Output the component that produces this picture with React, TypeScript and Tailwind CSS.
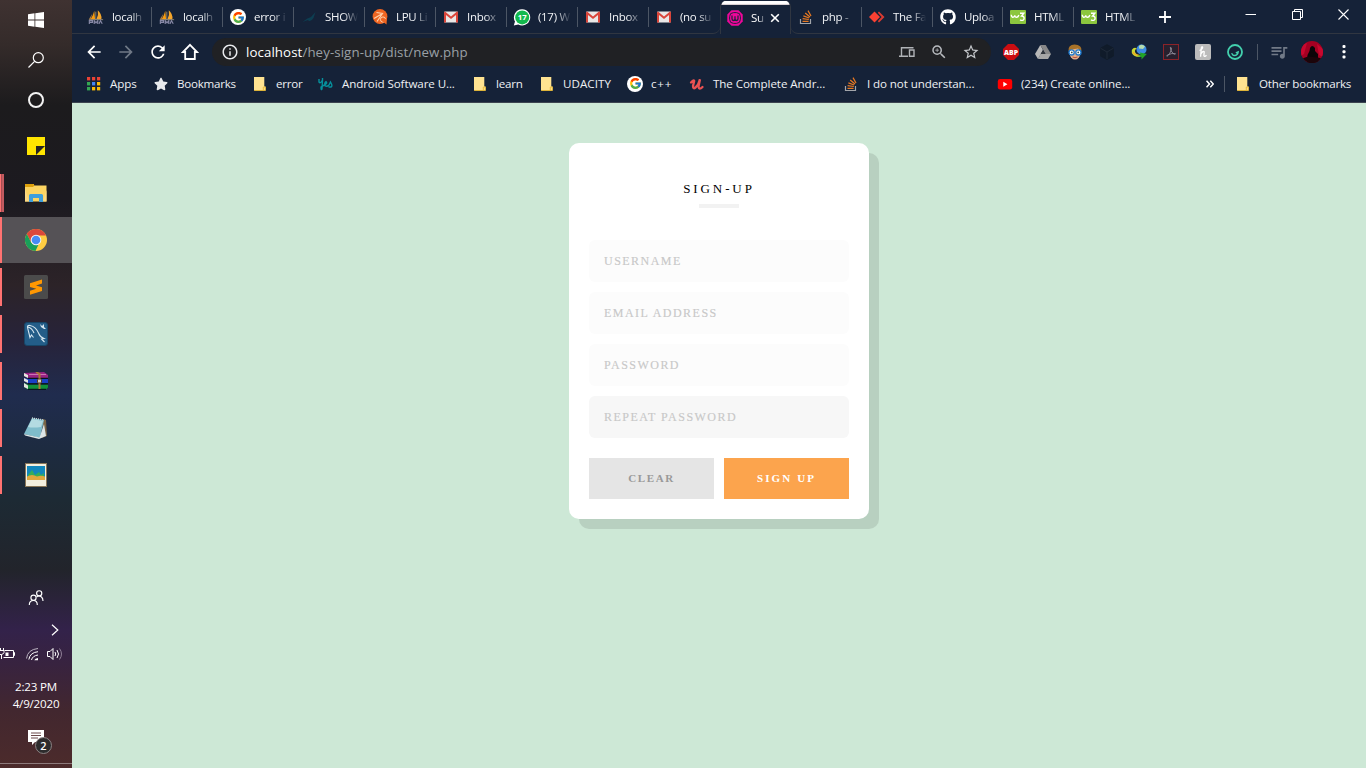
import React from "react";
import { FcGoogle } from "react-icons/fc";
import { FaGithub, FaStar } from "react-icons/fa";
import {
  MdArrowBack,
  MdArrowForward,
  MdRefresh,
  MdInfoOutline,
  MdZoomIn,
  MdStarBorder,
  MdQueueMusic,
} from "react-icons/md";

const UI = "font-['Open_Sans','Noto_Sans',sans-serif]";
const SERIF = "font-['Liberation_Serif',serif]";

/* ---------- favicons ---------- */

function PhpMyAdmin() {
  return (
    <svg width="18" height="16" viewBox="0 0 18 16">
      <path d="M7 1 L8 10.5 H3 Q6 6 7 1Z" fill="#f89c0e" />
      <path d="M11 .5 Q16 5 15 10.5 H9.5 Q12 6 11 .5Z" fill="#f5a62b" />
      <path d="M5 4 L1 10.5 H3Z" fill="#ad7d45" />
      <path d="M8.8 2V11 M1 11H17" stroke="#bba985" strokeWidth=".8" />
      <path d="M1.5 16V12H5V14H2M7 16V12L9 14.5L11 12V16M12.5 15.5L14 12L16 15.5" fill="none" stroke="#8889a6" strokeWidth="1.3" />
    </svg>
  );
}

function GoogleBadge() {
  return (
    <span className="flex size-4 items-center justify-center rounded-full bg-white">
      <FcGoogle size={13} />
    </span>
  );
}

function Swoosh() {
  return (
    <svg width="16" height="16" viewBox="0 0 16 16">
      <path d="M1.5 13 Q6 9 10 8 L14.5 3 L12.5 9 Q10.5 12.5 8 12 L7 11Z" fill="#0d3e51" />
    </svg>
  );
}

function Lpu() {
  return (
    <svg width="16" height="16" viewBox="0 0 16 16">
      <circle cx="8" cy="7.5" r="7.4" fill="#ef6521" />
      <path d="M2 9.5 L10.5 4.5 M5 12.5 L10.5 4.5 L4.5 3.5" fill="none" stroke="#ffd1ac" strokeWidth="1.2" />
      <circle cx="11" cy="10.5" r="2.6" fill="#ef6521" stroke="#ffd1ac" strokeWidth="1" />
      <path d="M10 12 L14.5 15.5 L15 9Z" fill="#ef6521" />
    </svg>
  );
}

function Gmail() {
  return (
    <svg width="16" height="16" viewBox="0 0 16 16">
      <rect x="1" y="2.5" width="14" height="11" rx="1" fill="#e9e7e6" />
      <path d="M1 4 V13.5 H3 V6 L8 10 L13 6 V13.5 H15 V3.5 Q15 2.5 14 2.5 L8 7.4 L2 2.5 Q1 2.5 1 4Z" fill="#d9453a" />
    </svg>
  );
}

function WhatsApp() {
  return (
    <svg className="shrink-0" width="18" height="17" viewBox="0 0 18 17">
      <path d="M9.2 .3a8.1 8.1 0 1 1-4 15.2L.8 16.6 2 12.4A8.1 8.1 0 0 1 9.2 .3Z" fill="#fff" />
      <circle cx="9.2" cy="8.4" r="7" fill="#12b94d" />
      <text x="9.2" y="11.3" textAnchor="middle" fontSize="7.8" fontWeight="700" fill="#fff" fontFamily="Open Sans, sans-serif">17</text>
    </svg>
  );
}

function Wamp() {
  return (
    <svg className="shrink-0" width="16" height="16" viewBox="0 0 16 16">
      <path d="M4.5 .3H11.5L15.7 4.5V11.5L11.5 15.7H4.5L.3 11.5V4.5Z" fill="#f0069c" />
      <rect x="2.6" y="2.6" width="10.8" height="10.8" rx="4" fill="none" stroke="#26203e" strokeWidth="1" />
      <path d="M5 5.5V8.8A1.5 1.7 0 0 0 8 8.8V6.3M8 8.8A1.5 1.7 0 0 0 11 8.8V5.5" fill="none" stroke="#26203e" strokeWidth="1.3" />
    </svg>
  );
}

function StackOverflow() {
  return (
    <svg width="16" height="16" viewBox="0 0 16 16">
      <path d="M2.5 10V14.5H12.5V10" fill="none" stroke="#a2a5aa" strokeWidth="1.2" />
      <path d="M4.5 12.4H10.6M4.6 9.7L10.8 10.5M5.4 6.9L11.2 9M7.2 4.1L12 8M10 1.6L13 7" stroke="#e87922" strokeWidth="1.25" />
    </svg>
  );
}

function Diamonds() {
  return (
    <svg width="16" height="16" viewBox="0 0 16 16">
      <path d="M5.5 2.5L11 8L5.5 13.5L0 8Z" fill="#fb4133" />
      <path d="M10 2.5L15.5 8L10 13.5L8.8 12.2L12.6 8L8.8 3.8Z" fill="#d93b31" />
    </svg>
  );
}

function W3() {
  return (
    <svg width="16" height="16" viewBox="0 0 16 16">
      <rect y="1" width="16" height="14" rx="1" fill="#8cc63e" />
      <path d="M1.3 5.8Q1.5 8.4 3 8.3Q4.8 8.2 4.8 6.2Q5 8.5 6.8 8.3Q8.3 8 8.8 6M10 4.3H13.8L11.6 7Q14.5 7 14 10Q13 12.3 10 10.8" fill="none" stroke="#fff" strokeWidth="1.4" />
    </svg>
  );
}

function Folder() {
  return (
    <svg width="16" height="16" viewBox="0 0 16 16">
      <path d="M2 1H12.3V10.5H13.6V14.6H2Z" fill="#ffe391" />
      <path d="M11.3 14.3V11H13.4V14.5H2.2" fill="none" stroke="#e7b934" strokeWidth=".9" />
    </svg>
  );
}

function AppsGrid() {
  const colors = ["#e94335", "#e94335", "#e94335", "#34a853", "#4285f4", "#fbbc05", "#34a853", "#fbbc05", "#fbbc05"];
  return (
    <svg width="16" height="16" viewBox="0 0 16 16">
      {colors.map((c, i) => (
        <rect key={i} x={1 + (i % 3) * 5} y={1 + Math.floor(i / 3) * 5} width="3.2" height="3.4" fill={c} />
      ))}
    </svg>
  );
}

function Squiggle() {
  return (
    <svg width="16" height="16" viewBox="0 0 16 16" fill="none" stroke="#06909c" strokeWidth="1.4">
      <path d="M1 3V6Q2.5 8 4.5 4V2M4.5 4L4 13Q3 15 3 11Q5 9.5 6.5 9Q10 7 8 5.5Q6 7 7.2 10Q9 11 11 9L12.5 6Q15 10 13 11H10.5" />
    </svg>
  );
}

function Udemy() {
  return (
    <svg width="16" height="16" viewBox="0 0 16 16" fill="none" stroke="#eb5252" strokeWidth="2.3" strokeLinecap="round">
      <path d="M2 6.5Q5 3.5 5.2 5L4 10Q4 13.5 6.5 11.5Q9.5 9 11 3.3L9.5 10.5Q10 14.5 13.5 11" />
    </svg>
  );
}

function YouTube() {
  return (
    <svg width="16" height="16" viewBox="0 0 16 16">
      <rect x=".8" y="3" width="14.4" height="10.6" rx="2.4" fill="#f00" />
      <path d="M6.3 5.8L10.4 8.3L6.3 10.8Z" fill="#fff" />
    </svg>
  );
}

/* ---------- tab strip ---------- */

type TabData = { icon: React.ReactNode; title: string; narrow?: boolean };

const leftTabs: TabData[] = [
  { icon: <PhpMyAdmin />, title: "localh" },
  { icon: <PhpMyAdmin />, title: "localh" },
  { icon: <GoogleBadge />, title: "error i" },
  { icon: <Swoosh />, title: "SHOW" },
  { icon: <Lpu />, title: "LPU Li" },
  { icon: <Gmail />, title: "Inbox" },
  { icon: <WhatsApp />, title: "(17) W" },
  { icon: <Gmail />, title: "Inbox" },
  { icon: <Gmail />, title: "(no su" },
];

const rightTabs: TabData[] = [
  { icon: <StackOverflow />, title: "php -" },
  { icon: <Diamonds />, title: "The Fa" },
  { icon: <FaGithub size={16} color="#fff" />, title: "Uploa", narrow: true },
  { icon: <W3 />, title: "HTML" },
  { icon: <W3 />, title: "HTML" },
];

function Tab({ icon, title, narrow = false, divider = true }: TabData & { divider?: boolean }) {
  return (
    <div className={`flex h-[33px] shrink-0 items-center pl-[7px] pt-px ${narrow ? "w-[70px]" : "w-[71px]"}`}>
      <span className="flex size-4 shrink-0 items-center justify-center">{icon}</span>
      <span className="ml-2 w-[36px] shrink-0 whitespace-nowrap text-[11.5px] tracking-[-0.3px] text-[#f2f4f7] [mask-image:linear-gradient(90deg,#000_50%,transparent_92%)]">
        {title}
      </span>
      <span className={divider ? `h-5 w-px shrink-0 bg-[#4c5665] ${narrow ? "ml-[2px]" : "ml-[3px]"}` : "hidden"} />
    </div>
  );
}

function ActiveTab() {
  return (
    <div className="flex h-[34px] w-[71px] shrink-0 flex-col overflow-hidden rounded-t-[7px] border-x border-[#303641] bg-[#152238]">
      <div className="mt-px h-[4px] shrink-0 rounded-t-[5px] bg-[linear-gradient(180deg,#fff_60%,#c9bcc0_100%)]" />
      <div className="flex h-[25px] items-center pl-[6px]">
        <Wamp />
        <span className="ml-2 w-[15px] shrink-0 whitespace-nowrap text-[11.5px] tracking-[-0.3px] text-white [mask-image:linear-gradient(90deg,#000_50%,transparent_98%)]">
          Su
        </span>
        <svg className="ml-[4px]" width="10" height="10" viewBox="0 0 10 10">
          <path d="M1.2 1.2L8.8 8.8M8.8 1.2L1.2 8.8" stroke="#fff" strokeWidth="1.6" />
        </svg>
      </div>
    </div>
  );
}

function TabStrip() {
  return (
    <div className="flex h-[34px] shrink-0">
      <div className="flex h-[34px] rounded-br-[7px] border-b border-[#303641] pl-[9px]">
        <div className="flex w-[639px]">
          {leftTabs.map((t, i) => (
            <Tab key={i} {...t} divider={i < 8} />
          ))}
        </div>
      </div>
      <ActiveTab />
      <div className="flex flex-1 rounded-bl-[7px] border-b border-[#303641]">
        <div className="flex w-[355px] shrink-0">
          {rightTabs.map((t, i) => (
            <Tab key={i} {...t} divider={i > 0 ? i < 4 : true} />
          ))}
        </div>
        <svg className="ml-[13px] mt-[11px]" width="12" height="12" viewBox="0 0 12 12">
          <path d="M6 0V12M0 6H12" stroke="#fff" strokeWidth="1.8" />
        </svg>
        <div className="ml-auto flex items-start pr-[17px]">
          <svg className="mr-[36px] mt-[9px]" width="11" height="11" viewBox="0 0 11 11">
            <path d="M.5 5.5H11" stroke="#fff" />
          </svg>
          <svg className="mr-[35px] mt-[9px]" width="11" height="11" viewBox="0 0 11 11" fill="none" stroke="#fff">
            <path d="M.5 2.5H8.5V10.5H.5ZM2.5 2.5V.5H10.5V8.5H8.5" />
          </svg>
          <svg className="mt-[9px]" width="11" height="11" viewBox="0 0 11 11">
            <path d="M.5 .5L10.5 10.5M10.5 .5L.5 10.5" stroke="#fff" strokeWidth="1.1" />
          </svg>
        </div>
      </div>
    </div>
  );
}

/* ---------- toolbar ---------- */

function Cell({ children }: { children: React.ReactNode }) {
  return <span className="flex w-8 shrink-0 items-center justify-center">{children}</span>;
}

function Toolbar() {
  return (
    <div className="flex h-9 shrink-0 items-center pl-[6px] text-white">
      <Cell><MdArrowBack size={20} /></Cell>
      <Cell><MdArrowForward size={20} color="#707987" /></Cell>
      <Cell><MdRefresh size={20} /></Cell>
      <Cell>
        <svg width="18" height="18" viewBox="0 0 18 18">
          <path d="M9 1.8L16 9H13.8V16H4.2V9H2Z" fill="none" stroke="#fff" strokeWidth="1.8" />
        </svg>
      </Cell>
      <div className="ml-[6px] flex h-7 w-[779px] items-center rounded-full bg-[#202124] pl-[9px]">
        <MdInfoOutline size={18} color="#e8eaed" />
        <span className="ml-[7px] flex-1 whitespace-nowrap pt-px text-[13.3px] tracking-[0.08px] text-[#9aa0a6]">
          <span className="text-white">localhost</span>/hey-sign-up/dist/new.php
        </span>
        <Cell>
          <svg width="16" height="14" viewBox="0 0 16 14">
            <path d="M2.5 10.5V2.7H14.5M0 11.2H9M10.5 5H15V11.2H10.5Z" fill="none" stroke="#b0b3b7" strokeWidth="1.4" />
          </svg>
        </Cell>
        <Cell><MdZoomIn size={18} color="#b8bbbf" /></Cell>
        <Cell><MdStarBorder size={18} color="#c4c7cb" /></Cell>
        <span className="w-[4px]" />
      </div>
      <span className="w-1" />
      <Cell>
        <svg width="16" height="16" viewBox="0 0 16 16">
          <path d="M5 0H11L16 5V11L11 16H5L0 11V5Z" fill="#cb0d11" />
          <text x="8" y="10.8" textAnchor="middle" fontSize="7.6" fontWeight="800" fill="#fff" fontFamily="Open Sans, sans-serif" textLength="14" lengthAdjust="spacingAndGlyphs">ABP</text>
        </svg>
      </Cell>
      <Cell>
        <svg width="16" height="14" viewBox="0 0 16 14">
          <path d="M5.3 0L8 5L3 14L0 9Z" fill="#b8b8b8" />
          <path d="M5.3 0H10.7L16 9H10.5Z" fill="#888" />
          <path d="M5.5 9H16L13 14H3Z" fill="#a6a6a6" />
          <path d="M8 5L10.3 9H5.7Z" fill="#34383e" />
        </svg>
      </Cell>
      <Cell>
        <svg width="16" height="16" viewBox="0 0 16 16">
          <ellipse cx="8" cy="9" rx="5.3" ry="6.6" fill="#e3b08b" />
          <path d="M1.5 7Q1 .5 7.5 .5Q15 .5 14.5 7L11 4.5L6 5.2L3.5 7Z" fill="#a87228" />
          <circle cx="4.6" cy="8.4" r="2.6" fill="#fff" stroke="#1f79cc" strokeWidth="1.3" />
          <circle cx="11.4" cy="8.4" r="2.6" fill="#fff" stroke="#1f79cc" strokeWidth="1.3" />
          <circle cx="4.8" cy="8.4" r=".9" fill="#355" />
          <circle cx="11.2" cy="8.4" r=".9" fill="#355" />
          <path d="M5.5 13Q8 14.4 10.5 13" fill="none" stroke="#b74e40" />
        </svg>
      </Cell>
      <Cell>
        <svg width="16" height="16" viewBox="0 0 16 16">
          <path d="M8 .7L14.5 4.2V12L8 15.5L1.5 12V4.2Z" fill="#101b2a" stroke="#111c2a" />
          <path d="M1.5 4.2L8 8L14.5 4.2M8 8V15" stroke="#1f2a39" fill="none" />
        </svg>
      </Cell>
      <Cell>
        <svg width="16" height="16" viewBox="0 0 16 16">
          <circle cx="10.5" cy="5.5" r="5" fill="#3c8ae0" />
          <path d="M8 2Q11 -.5 14 2.5L12 5L8 4.5Z" fill="#b5dcae" />
          <path d="M.8 6Q3 2.5 6 4.5Q3.5 5.5 4 8Q5 11 9.5 11V13Q3 13.5 .8 9Z" fill="#c8d834" />
          <path d="M2 8Q4 11.5 9 11.5" fill="none" stroke="#ff9e1d" strokeWidth="1.1" />
          <path d="M9 8.5L15.8 10L10.5 15.5V13L6 12L9.5 11Z" fill="#21a325" />
        </svg>
      </Cell>
      <Cell>
        <svg width="16" height="16" viewBox="0 0 16 16" fill="none">
          <rect x=".5" y=".5" width="15" height="15" fill="#27202e" stroke="#8b2329" />
          <path d="M7.3 3.3Q9 3 8.2 6.3Q7 10.3 4 12.3Q2.8 12 5 10.8Q9 8.8 12.5 9.8Q12.5 11 10 9.3Q7.5 7.3 7.3 3.3Z" stroke="#8f8c99" strokeWidth=".9" />
        </svg>
      </Cell>
      <Cell>
        <svg width="16" height="16" viewBox="0 0 16 16" fill="none">
          <rect width="16" height="16" rx="2" fill="#bcbcbc" />
          <path d="M4.5 6.5Q7.8 5 7.6 3.3Q7 2 6.3 4L5.6 12.8M6 9.8Q8 6.5 9.2 7.7L8.9 11.5Q9.3 13.5 11.5 11.3" stroke="#fff" strokeWidth="1.3" />
        </svg>
      </Cell>
      <Cell>
        <svg width="16" height="16" viewBox="0 0 16 16" fill="none" stroke="#43d0ad" strokeWidth="1.8">
          <circle cx="8" cy="8" r="7" />
          <path d="M4.6 9.2Q5.6 11.6 8 11.5Q11 11.2 11.2 7.8L8.8 8.8" strokeWidth="1.4" />
        </svg>
      </Cell>
      <span className="ml-[6px] h-4 w-px bg-[#4c5665]" />
      <span className="ml-[5px]"><Cell><MdQueueMusic size={20} color="#717a87" /></Cell></span>
      <span className="ml-[6px] flex size-[22px] shrink-0 overflow-hidden rounded-full bg-[#a60022]">
        <svg width="22" height="22" viewBox="0 0 22 22">
          <path d="M0 4L6 2L3 13L0 15M16 3L22 8V16L18 14Z" fill="#c8082f" />
          <path d="M6 22L6.5 14L8.5 10L9 7Q11 3 14 7L14 10L17 13L17 22Z" fill="#0c0508" />
          <path d="M0 18L7 15.5L17 16.5L22 18V22H0Z" fill="#1b050a" />
        </svg>
      </span>
      <svg className="ml-[19px]" width="4" height="14" viewBox="0 0 4 14" fill="#fff">
        <rect x=".5" y="0" width="3" height="3" rx="1" />
        <rect x=".5" y="5.2" width="3" height="3" rx="1" />
        <rect x=".5" y="10.4" width="3" height="3" rx="1" />
      </svg>
    </div>
  );
}

/* ---------- bookmarks ---------- */

const bookmarks = [
  { icon: <AppsGrid />, label: "Apps", w: "w-[67px]", t: "tracking-[-0.1px]" },
  { icon: <FaStar size={14} color="#e8eaed" />, label: "Bookmarks", w: "w-[99px]", t: "tracking-[-0.25px]" },
  { icon: <Folder />, label: "error", w: "w-[66px]", t: "tracking-[-0.25px]" },
  { icon: <Squiggle />, label: "Android Software U...", w: "w-[154px]", t: "tracking-[-0.1px]" },
  { icon: <Folder />, label: "learn", w: "w-[67px]", t: "tracking-[-0.2px]" },
  { icon: <Folder />, label: "UDACITY", w: "w-[88px]", t: "tracking-[0.05px]" },
  { icon: <GoogleBadge />, label: "c++", w: "w-[62px]", t: "tracking-[0.8px]" },
  { icon: <Udemy />, label: "The Complete Andr...", w: "w-[154px]", t: "tracking-[-0.07px]" },
  { icon: <StackOverflow />, label: "I do not understan...", w: "w-[154px]", t: "tracking-[-0.1px]" },
  { icon: <YouTube />, label: "(234) Create online...", w: "w-[154px]", t: "tracking-[-0.08px]" },
];

function BookmarkBar() {
  return (
    <div className="flex h-[33px] shrink-0 items-center border-b border-[#3c4450] pb-[4px] pl-[14px] text-[11.6px] text-[#eef0f3]">
      {bookmarks.map((b) => (
        <div key={b.label} className={`flex shrink-0 items-center gap-2 ${b.w}`}>
          <span className="flex size-4 items-center justify-center">{b.icon}</span>
          <span className={`whitespace-nowrap ${b.t}`}>{b.label}</span>
        </div>
      ))}
      <svg className="ml-[55px]" width="8" height="8" viewBox="0 0 8 8">
        <path d="M.5 .8L3.5 4L.5 7.2M4.3 .8L7.3 4L4.3 7.2" fill="none" stroke="#fff" strokeWidth="1.5" />
      </svg>
      <span className="ml-[10px] h-4 w-px bg-[#4c5665]" />
      <div className="ml-[10px] flex items-center gap-2">
        <Folder />
        <span className="whitespace-nowrap tracking-[-0.2px]">Other bookmarks</span>
      </div>
    </div>
  );
}

/* ---------- taskbar ---------- */

const apps: { name: string; mark: string; active?: boolean; icon: React.ReactNode }[] = [
  {
    name: "notes",
    mark: "none",
    icon: (
      <svg width="18" height="18" viewBox="0 0 18 18">
        <path d="M0 0H18V18H0Z" fill="#ffe500" />
        <path d="M9 9H18L9 18Z" fill="#232323" />
      </svg>
    ),
  },
  {
    name: "explorer",
    mark: "stack",
    icon: (
      <svg width="22" height="18" viewBox="0 0 22 18">
        <path d="M0 0H9V1.5H21.5V17.5H0Z" fill="#fcd462" />
        <path d="M0 0H8.5L9.5 1.5L8 3H0Z" fill="#dda00c" />
        <path d="M4 18V11.5Q4 10 5.5 10H16.5Q18 10 18 11.5V18H14V14H8V18Z" fill="#3f9edb" />
        <path d="M0 17.5V5L4 16.5V17.5ZM18 17.5H21.5V6Z" fill="#fbd985" />
      </svg>
    ),
  },
  {
    name: "chrome",
    mark: "bar",
    active: true,
    icon: (
      <svg width="22" height="22" viewBox="0 0 22 22">
        <circle cx="11" cy="11" r="11" fill="#ffcd42" />
        <path d="M1.8 5A11 11 0 0 1 20.2 5L20.9 6.4H11L6.2 13.5Z" fill="#dc483b" />
        <path d="M1.8 5L6.3 13.7L11.5 16.2L13.5 15.5L10.5 22A11 11 0 0 1 1.8 5Z" fill="#189f5a" />
        <circle cx="11" cy="11" r="5.3" fill="#f3f3f3" />
        <circle cx="11" cy="11" r="4.3" fill="#478bf4" />
      </svg>
    ),
  },
  {
    name: "sublime",
    mark: "bar",
    icon: (
      <svg width="24" height="24" viewBox="0 0 24 24">
        <rect width="24" height="24" rx="1.5" fill="#4b4b4b" />
        <path d="M6 8.3L18 4.5V8.6L12 10.5L18 12.3V16L6 19.8V15.8L12.3 13.7L6 11.9Z" fill="#ff9802" />
      </svg>
    ),
  },
  {
    name: "mysql",
    mark: "bar",
    icon: (
      <svg width="24" height="24" viewBox="0 0 24 24" fill="none">
        <rect x=".5" y=".5" width="23" height="23" rx="2.5" fill="#235d88" stroke="#174566" />
        <path d="M9.5 15.5L7.5 13L6 15.5L3.5 5.5Q3 3 6 3.5Q12 4.5 15 12Q16 15 20 16.5L17.5 17L20.5 20M4 5Q8 6 10 11" stroke="#d4e5ef" strokeWidth="1.1" />
        <path d="M16 2L18 4L20 2V5L22 7L20 7L17 5Z" fill="#d4e5ef" />
      </svg>
    ),
  },
  {
    name: "winrar",
    mark: "bar",
    icon: (
      <svg width="24" height="18" viewBox="0 0 24 18">
        <path d="M0 1L20 0L24 3V6H4L0 4Z" fill="#9a2383" />
        <path d="M0 6L4 7H24V11H4L0 9Z" fill="#1940c6" />
        <path d="M0 11L4 12.5H24V15.5L22 17.5H4L0 15Z" fill="#12923a" />
        <path d="M4 6.3H24M4 11.8H24M4 17.4H22" stroke="#07151d" strokeWidth="1.2" />
        <path d="M0 1L4 3V6L0 4ZM0 6L4 8V11L0 9ZM0 11L4 13.5V17L0 15Z" fill="#e5e5df" />
        <path d="M5 2.5H22" stroke="#ca75b3" />
        <path d="M12 0L15.5 2V17" stroke="#ac7932" strokeWidth="2" fill="none" />
        <rect x="13.5" y="7" width="4" height="4" rx="1" fill="#d2cdbf" stroke="#573e20" />
      </svg>
    ),
  },
  {
    name: "notepad",
    mark: "bar",
    icon: (
      <svg width="24" height="24" viewBox="0 0 24 24">
        <path d="M19 3L22 4L23 20L18 22Z" fill="#786446" />
        <path d="M8 2L20 4L16 22L0 18Z" fill="#7fbccb" />
        <path d="M8 3L19 5L17 11Q9 12 4 11Z" fill="#b4dbe2" />
        <path d="M0 18L15.5 21.5L20 8L22 20L15 23L1 19.5Z" fill="#dce5e6" />
        <path d="M8 2L20 4" stroke="#d7e0de" strokeDasharray="1 1" strokeWidth="1.3" />
      </svg>
    ),
  },
  {
    name: "photos",
    mark: "bar",
    icon: (
      <svg width="22" height="24" viewBox="0 0 22 24">
        <rect x=".5" y=".5" width="21" height="23" fill="#f3efdf" stroke="#887557" />
        <rect x="2" y="3" width="18" height="14" fill="#1287bc" />
        <path d="M3 12L7 7L10 12L14 9L16 12L19 10V15H3Z" fill="#33ad5c" />
        <path d="M2 13.5Q7 10.5 12 13.5Q16 12 20 13.5V17H2Z" fill="#dfa83d" />
      </svg>
    ),
  },
];

function Taskbar() {
  return (
    <aside className="flex h-full w-[72px] shrink-0 flex-col bg-[linear-gradient(180deg,#3f3231_0px,#342b2a_45px,#1c1b1d_105px,#1c1a20_200px,#2c2328_285px,#27233a_340px,#202c4e_395px,#1d2b40_450px,#1d2a34_500px,#22242b_570px,#33224a_630px,#38233f_665px,#42272f_710px,#4c2b2b_768px)] text-white">
      <div className="flex h-10 shrink-0 items-center justify-center">
        <svg width="16" height="16" viewBox="0 0 16 16" fill="#fff">
          <path d="M0 2.2L6.5 1.3V7.6H0ZM7.3 1.2L16 0V7.6H7.3ZM0 8.4H6.5V14.7L0 13.8ZM7.3 8.4H16V16L7.3 14.8Z" />
        </svg>
      </div>
      <div className="flex h-10 shrink-0 items-center justify-center">
        <svg width="16" height="16" viewBox="0 0 16 16" fill="none" stroke="#fff" strokeWidth="1.2">
          <circle cx="10.3" cy="5.7" r="5" />
          <path d="M6.6 9.4L.5 15.5" />
        </svg>
      </div>
      <div className="mb-[3px] flex h-10 shrink-0 items-center justify-center">
        <span className="size-4 rounded-full border-[2.4px] border-[#f2f2f2]" />
      </div>
      {apps.map((a) => (
        <div key={a.name} className={`mb-px flex h-[46px] shrink-0 items-center ${a.active ? "bg-[#555256]" : ""}`}>
          <span className="flex w-[4px] shrink-0">
            {a.mark === "bar" && <span className={`w-[2px] bg-[#ff7271] ${a.active ? "h-[46px]" : "h-[38px]"}`} />}
            {a.mark === "stack" && (
              <>
                <span className="h-[38px] w-px bg-[#ff7271]" />
                <span className="h-[38px] w-px bg-[#a84d52]" />
                <span className="h-[38px] w-[2px] bg-[#c35a5f]" />
              </>
            )}
          </span>
          <span className="flex w-[64px] justify-center">{a.icon}</span>
        </div>
      ))}
      <div className="mt-[91px] flex h-4 shrink-0 items-center justify-center">
        <svg width="16" height="16" viewBox="0 0 16 16" fill="none" stroke="#fff" strokeWidth="1.15">
          <circle cx="5.5" cy="7.7" r="2.6" />
          <path d="M1.3 15Q1.3 10.5 5.5 10.5Q9.3 10.5 9.3 15" />
          <circle cx="11.2" cy="3.3" r="2.6" />
          <path d="M8.5 7Q11 5 13.5 7Q15 8.3 15 11" />
        </svg>
      </div>
      <div className="mt-[18px] flex h-3 shrink-0 justify-end pr-[13px]">
        <svg width="8" height="12" viewBox="0 0 8 12">
          <path d="M1 .8L6.8 6L1 11.2" fill="none" stroke="#fff" strokeWidth="1.2" />
        </svg>
      </div>
      <div className="mt-[10px] flex h-4 shrink-0 items-center">
        <svg width="15" height="14" viewBox="0 0 15 14" fill="none" stroke="#fff">
          <path d="M4.5 3.5H13.5V10.5H3.5M13.5 5.5H14.5V8.5H13.5M0 3.5H4V5.5Q3 7.5 1.5 7.5H0M.5 1V3M3.5 1V3M1.5 7.5V12" />
          <path d="M5.5 5.5H8.5V9H5.5Z" fill="#fff" stroke="none" />
        </svg>
        <svg className="ml-[11px]" width="13" height="14" viewBox="0 0 13 14" fill="none" stroke="#fff">
          <path d="M.5 11.5Q1.5 2.5 12 1.5" stroke="#bbb4c2" />
          <path d="M2.8 12.5Q4 5.5 12 4.7M5.5 13Q6.5 8.8 12 8" />
          <path d="M8.3 13.2Q9 11.4 12 11V13.2Z" fill="#fff" stroke="none" />
        </svg>
        <svg className="ml-[8px]" width="16" height="14" viewBox="0 0 16 14" fill="none" stroke="#fff">
          <path d="M.5 4.5H3L6 1.5V12.5L3 9.5H.5ZM8 5Q9.5 7 8 9M10 3Q13 7 10 11" />
          <path d="M12.5 1.5Q16.5 7 12.5 12.5" stroke="#908197" />
        </svg>
      </div>
      <div className="mt-[16px] shrink-0 text-center text-[11.6px] leading-[17px] tracking-[-0.2px]">
        <div>2:23 PM</div>
        <div>4/9/2020</div>
      </div>
      <div className="mt-[18px] flex h-[25px] shrink-0 pl-7">
        <div className="relative">
          <svg width="16" height="15" viewBox="0 0 16 15">
            <path d="M0 0H16V12H7L4 15V12H0Z" fill="#fff" />
            <path d="M3 3H13M3 5.5H13M3 8H10" stroke="#6c4a4c" />
          </svg>
          <span className="absolute left-[7px] top-[7px] flex size-[17px] items-center justify-center rounded-full border border-[#8b8283] bg-[#2d2c2d] text-[11px] font-semibold leading-none">
            2
          </span>
        </div>
      </div>
      <div className="mt-auto mb-[4px] h-px shrink-0 bg-[#8d7a7b]" />
    </aside>
  );
}

/* ---------- sign-up form ---------- */

function Field({ label, focused = false }: { label: string; focused?: boolean }) {
  return (
    <input
      placeholder={label}
      className={`h-[42px] w-full rounded-[6px] px-[15px] text-[12px] tracking-[1.47px] outline-none [-webkit-text-stroke:0.15px_#c8c8c8] placeholder:text-[#c8c8c8] ${
        focused ? "bg-[#f7f7f7]" : "bg-[#fcfcfc]"
      }`}
    />
  );
}

function SignUp() {
  return (
    <form className={`flex h-[376px] w-[300px] flex-col items-center rounded-[10px] bg-white px-5 shadow-[10px_10px_0_#b8d0c0] ${SERIF}`}>
      <h1 className="mt-[37px] text-[13px] leading-[18px] tracking-[2.9px] text-black">SIGN-UP</h1>
      <div className="mt-[6px] h-1 w-10 bg-[#f2f2f2]" />
      <div className="mt-8 flex w-full flex-col gap-[10px]">
        <Field label="USERNAME" />
        <Field label="EMAIL ADDRESS" />
        <Field label="PASSWORD" />
        <Field label="REPEAT PASSWORD" focused />
      </div>
      <div className="mt-5 flex w-full gap-[10px] text-[11px] font-bold">
        <button type="button" className="h-[41px] flex-1 bg-[#e5e5e5] tracking-[1.6px] text-[#999]">CLEAR</button>
        <button type="button" className="h-[41px] flex-1 bg-[#fca44d] tracking-[2.1px] text-white">SIGN UP</button>
      </div>
    </form>
  );
}

export default function App() {
  return (
    <div className={`flex h-[768px] w-[1366px] overflow-hidden ${UI}`}>
      <Taskbar />
      <div className="flex min-w-0 flex-1 flex-col bg-[#152238]">
        <TabStrip />
        <Toolbar />
        <BookmarkBar />
        <main className="flex flex-1 items-start justify-center bg-[#cde8d6] pt-10">
          <SignUp />
        </main>
      </div>
    </div>
  );
}
